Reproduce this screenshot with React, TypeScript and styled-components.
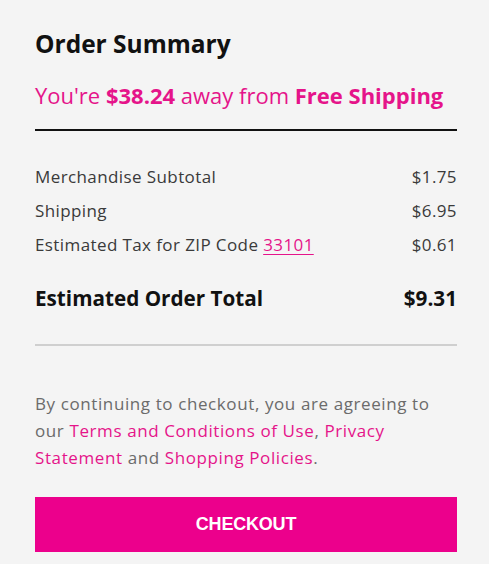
import React from 'react'
import styled, { createGlobalStyle } from 'styled-components'

const GlobalStyle = createGlobalStyle`
  html, body {
    margin: 0;
    padding: 0;
    background: #f4f4f4;
  }
  body {
    font-family: "Open Sans", Lato, Arial, sans-serif;
    -webkit-font-smoothing: antialiased;
  }
`

const PINK = '#e5148a'

const Summary = styled.section`
  width: 422px;
  margin-left: 35px;
  padding-top: 28px;
  color: #333;
`

const Title = styled.h2`
  margin: 0;
  font-size: 24.5px;
  line-height: 32px;
  font-weight: 700;
  color: #111;
`

const Promo = styled.p`
  margin: 20px 0 0;
  font-size: 22px;
  line-height: 30px;
  color: ${PINK};

  strong {
    font-weight: 700;
  }
`

const Rule = styled.hr<{ $dark?: boolean }>`
  border: 0;
  margin: 0;
  height: 2px;
  background: ${(p) => (p.$dark ? '#111' : '#cfcfcf')};
`

const TopRule = styled(Rule)`
  margin-top: 19px;
`

const Rows = styled.div`
  display: flex;
  flex-direction: column;
  gap: 14px;
  padding-top: 36px;
`

const Row = styled.div<{ $total?: boolean }>`
  display: flex;
  justify-content: space-between;
  align-items: baseline;
  font-size: ${(p) => (p.$total ? '20.7px' : '17px')};
  letter-spacing: ${(p) => (p.$total ? '0' : '0.4px')};
  line-height: 20px;
  font-weight: ${(p) => (p.$total ? 700 : 400)};
  color: ${(p) => (p.$total ? '#111' : '#3a3a3a')};
  margin-top: ${(p) => (p.$total ? '19px' : '0')};
`

const Zip = styled.a`
  color: ${PINK};
  text-decoration: underline;
  text-underline-offset: 3px;
`

const BottomRule = styled(Rule)`
  margin-top: 36px;
`

const Legal = styled.p`
  margin: 44px 0 0;
  font-size: 17px;
  letter-spacing: 0.6px;
  line-height: 27px;
  color: #6b6b6b;

  a {
    color: ${PINK};
    text-decoration: none;
  }
`

const CheckoutButton = styled.button`
  display: block;
  width: 100%;
  height: 55px;
  margin-top: 26px;
  border: 0;
  background: #ec008c;
  color: #fff;
  font-family: "Liberation Sans", Arial, sans-serif;
  font-weight: 700;
  font-size: 18px;
  letter-spacing: -0.2px;
  cursor: pointer;
`

export default function App() {
  return (
    <>
      <GlobalStyle />
      <Summary>
        <Title>Order Summary</Title>
        <Promo>
          You're <strong>$38.24</strong> away from <strong>Free Shipping</strong>
        </Promo>
        <TopRule $dark />

        <Rows>
          <Row>
            <span>Merchandise Subtotal</span>
            <span>$1.75</span>
          </Row>
          <Row>
            <span>Shipping</span>
            <span>$6.95</span>
          </Row>
          <Row>
            <span>
              Estimated Tax for ZIP Code <Zip href="#">33101</Zip>
            </span>
            <span>$0.61</span>
          </Row>
          <Row $total>
            <span>Estimated Order Total</span>
            <span>$9.31</span>
          </Row>
        </Rows>

        <BottomRule />

        <Legal>
          By continuing to checkout, you are agreeing to our{' '}
          <a href="#">Terms and Conditions of Use</a>, <a href="#">Privacy Statement</a> and{' '}
          <a href="#">Shopping Policies</a>.
        </Legal>

        <CheckoutButton>CHECKOUT</CheckoutButton>
      </Summary>
    </>
  )
}
